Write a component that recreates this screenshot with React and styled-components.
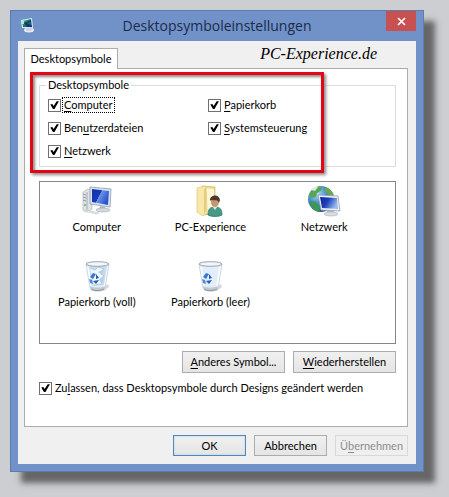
import styled, { createGlobalStyle } from "styled-components";

const groupOptions = [
  { id: "computer", before: "", letter: "C", after: "omputer", focused: true },
  { id: "papierkorb", before: "", letter: "P", after: "apierkorb" },
  { id: "benutzer", before: "Ben", letter: "u", after: "tzerdateien" },
  { id: "system", before: "", letter: "S", after: "ystemsteuerung" },
  { id: "netzwerk", before: "", letter: "N", after: "etzwerk" },
];

const desktopIcons = [
  { label: "Computer", Icon: ComputerIcon },
  { label: "PC-Experience", Icon: UserFolderIcon },
  { label: "Netzwerk", Icon: NetworkIcon },
  { label: "Papierkorb (voll)", Icon: FullBinIcon },
  { label: "Papierkorb (leer)", Icon: BinIcon },
];

export default function App() {
  return (
    <>
      <GlobalStyle />
      <Desktop>
        <Dialog>
          <TitleBar>
            <TitleIcon />
            <Title>Desktopsymboleinstellungen</Title>
            <CloseButton type="button" aria-label="Schließen">
              <svg width="9" height="9" viewBox="0 0 9 9">
                <path d="M1 1l7 7M8 1L1 8" stroke="#fff" strokeWidth="1.7" />
              </svg>
            </CloseButton>
          </TitleBar>

          <Client>
            <TabRow>
              <Tab type="button">Desktopsymbole</Tab>
              <Brand>PC-Experience.de</Brand>
            </TabRow>

            <Panel>
              <GroupArea>
                <Group>
                  <legend>Desktopsymbole</legend>
                  <OptionGrid>
                    {groupOptions.map((option) => (
                      <Option key={option.id} {...option} />
                    ))}
                  </OptionGrid>
                </Group>
                <Highlight />
              </GroupArea>

              <IconList>
                {desktopIcons.map(({ label, Icon }) => (
                  <IconItem key={label}>
                    <Icon />
                    <span>{label}</span>
                  </IconItem>
                ))}
              </IconList>

              <PanelButtons>
                <Button type="button">
                  <u>A</u>nderes Symbol...
                </Button>
                <Button type="button">
                  <u>W</u>iederherstellen
                </Button>
              </PanelButtons>

              <Option
                id="designs"
                before="Zu"
                letter="l"
                after="assen, dass Desktopsymbole durch Designs geändert werden"
              />
            </Panel>

            <Footer>
              <Button type="button" $primary>
                OK
              </Button>
              <Button type="button">Abbrechen</Button>
              <Button type="button" disabled>
                Ü<u>b</u>ernehmen
              </Button>
            </Footer>
          </Client>
        </Dialog>
      </Desktop>
    </>
  );
}

function Option({ id, before, letter, after, focused }) {
  return (
    <OptionLabel htmlFor={id}>
      <CheckBox type="checkbox" id={id} defaultChecked />
      <OptionText $focused={focused}>
        {before}
        <u>{letter}</u>
        {after}
      </OptionText>
    </OptionLabel>
  );
}

function TitleIcon() {
  return (
    <svg width="16" height="16" viewBox="0 0 16 16">
      <defs>
        <linearGradient id="titleScreen" x1="0" y1="0" x2="1" y2="1">
          <stop offset="0" stopColor="#48c98c" />
          <stop offset="0.45" stopColor="#148a6c" />
          <stop offset="1" stopColor="#173fae" />
        </linearGradient>
      </defs>
      <path d="M1 3l11-2 1 10-11 0z" fill="#dce9f2" />
      <path d="M2 4l9-2 1 8-9 0z" fill="url(#titleScreen)" />
      <path d="M4 6l7-3v2l-4 1 5 3v1l-5 0z" fill="#1d326f" />
      <path d="M1 4h3v3H1z" fill="#b7e5c9" />
      <ellipse cx="9" cy="13" rx="5" ry="2.5" fill="#e6ebef" />
      <path d="M5 11l8-1-2 4-4 0z" fill="#cbd4dd" />
    </svg>
  );
}

function ComputerIcon() {
  return (
    <svg width="32" height="32" viewBox="0 0 32 32">
      <defs>
        <linearGradient id="pcScreen" x1="0" y1="0" x2="1" y2="0.5">
          <stop offset="0" stopColor="#1234a4" />
          <stop offset="0.5" stopColor="#173cb8" />
          <stop offset="0.52" stopColor="#6c94e8" />
          <stop offset="1" stopColor="#2a54cc" />
        </linearGradient>
      </defs>
      <path d="M2 7l5-3 4 1v19l-5 3-4-2z" fill="#dfe3e5" stroke="#b0b7ba" strokeWidth="0.7" />
      <path d="M6 7v19" stroke="#a6adb0" />
      <path d="M2 9l3 1M2 12l3 1M2 15l3 1" stroke="#929a9e" />
      <circle cx="4" cy="20" r="1" fill="#6fae6b" />
      <path d="M19 21l5 1 1 4-7-1z" fill="#aeb7be" />
      <ellipse cx="22" cy="25" rx="7" ry="2" fill="#d3d9dd" stroke="#a2abb1" strokeWidth="0.6" />
      <path d="M9 2l21 2-1 18-20-3z" fill="#dae5f1" stroke="#8a9bb0" strokeWidth="0.8" />
      <path d="M11 4l17 2-1 14-16-3z" fill="url(#pcScreen)" />
      <path d="M6 25l12 3-3 1-12-3z" fill="#e3e6e7" stroke="#bcc2c6" strokeWidth="0.5" />
    </svg>
  );
}

function UserFolderIcon() {
  return (
    <svg width="32" height="32" viewBox="0 0 32 32">
      <path d="M8 1l13 1v27l-13 1z" fill="#f1d98a" stroke="#d6b65b" strokeWidth="0.7" />
      <path d="M11 3l9 1v24H11z" fill="#fff6d5" />
      <path d="M3 3l9-2 1 26-4 4-6-4z" fill="#f8e9ab" stroke="#dfc678" strokeWidth="0.7" />
      <path d="M10 4l2-2v24l-2 3z" fill="#e8cd78" />
      <path d="M14 30c0-6 2-8 7-8s7 2 7 8c-3 2-11 2-14 0z" fill="#479b86" stroke="#2c7564" strokeWidth="0.7" />
      <path d="M18 21l3 4 3-4z" fill="#d7e7db" />
      <ellipse cx="21" cy="17" rx="4" ry="5" fill="#c99570" />
      <path d="M16 16c-1-6 9-8 10-1l-1 3c-1-4-5-2-8-3z" fill="#4d392a" />
    </svg>
  );
}

function NetworkIcon() {
  return (
    <svg width="34" height="32" viewBox="0 0 34 32">
      <defs>
        <radialGradient id="globe" cx="0.35" cy="0.3" r="0.7">
          <stop offset="0" stopColor="#b5dcf5" />
          <stop offset="0.5" stopColor="#4a92cb" />
          <stop offset="1" stopColor="#255a93" />
        </radialGradient>
        <linearGradient id="netScreen" x1="0" y1="0" x2="1" y2="0.4">
          <stop offset="0" stopColor="#0d229f" />
          <stop offset="0.5" stopColor="#1e43b8" />
          <stop offset="1" stopColor="#96b9ef" />
        </linearGradient>
      </defs>
      <circle cx="14" cy="14" r="13" fill="url(#globe)" />
      <path d="M4 6c3-4 8-5 10-4l1 3-5 3-1 4-5 1-2-3z" fill="#59a553" />
      <path d="M18 2c5 1 8 5 9 9l-5-1-4-4z" fill="#68aa4b" />
      <path d="M3 16l6 1 4 5-1 5C6 26 3 21 3 16z" fill="#3e9659" />
      <path d="M4 5l4-3 3 0-3 4z" fill="#d6edde" />
      <path d="M20 25l6-1 2 5-9 1z" fill="#b8c1c8" />
      <ellipse cx="24" cy="29" rx="7" ry="2" fill="#d7dde2" stroke="#aab3bc" strokeWidth="0.6" />
      <path d="M11 10l20 1 2 15-19-1z" fill="#eef2f6" stroke="#929dac" strokeWidth="0.8" />
      <path d="M13 12l17 1 1 11-16-1z" fill="url(#netScreen)" />
    </svg>
  );
}

function BinIcon({ children }) {
  return (
    <svg width="32" height="32" viewBox="0 0 32 32">
      <path d="M17 29l10-5 1 3-5 4z" fill="#d9d9d9" />
      <path d="M5 4l4 24c3 3 12 3 15 0l4-24z" fill="#e2eefa" stroke="#b9cbdd" strokeWidth="0.7" />
      <path d="M7 7l3 19M26 7l-3 19" stroke="#ffffff" strokeWidth="1.5" />
      {children}
      <path d="M9 26c4 2 11 2 15 0l-1 4c-3 2-10 2-13 0z" fill="#c3c9cd" />
      <path d="M10 29c3 2 9 2 13 0" stroke="#8d959b" fill="none" />
      <ellipse cx="16.5" cy="4" rx="11.5" ry="2.3" fill="#f2f7fb" stroke="#9aa3ab" />
      <path d="M9 17l3-4 3 1-3 5z" fill="#3a7bd0" />
      <path d="M15 14l3 4-3 1zM18 20l-3 4-3-3z" fill="#2260b7" />
      <path d="M8 19l3 1 1 4-3-1z" fill="#4a8adb" />
    </svg>
  );
}

function FullBinIcon() {
  return (
    <BinIcon>
      <path d="M8 6l5-2 3 3 5-3 5 3-3 18-12 1z" fill="#cbdced" />
      <path d="M9 8l5 2 3-3 6 2-4 4 4 3-4 3 2 5-8 1" fill="#eff6fc" stroke="#a2bdd8" strokeWidth="0.7" />
      <path d="M17 12l6-3-2 6zM18 20l5-3-1 6z" fill="#b5cde5" />
    </BinIcon>
  );
}

const GlobalStyle = createGlobalStyle`
  * {
    box-sizing: border-box;
  }
  body {
    margin: 0;
    background-color: #cdced2;
    color: #000000;
    font-family: Lato, "Liberation Sans", sans-serif;
    font-size: 11px;
    line-height: 14px;
  }
  button {
    font: inherit;
    color: inherit;
    padding: 0;
  }
  u {
    text-underline-offset: 2px;
  }
`;

const Desktop = styled.main`
  padding: 10px 25px 25px 10px;
`;

const Dialog = styled.section`
  padding: 0 7px 7px;
  background-color: #7092c8;
  border: 1px solid #5c7cad;
  box-shadow: 11px 11px 6px #666666;
`;

const TitleBar = styled.header`
  display: grid;
  grid-template-columns: 30px 1fr 30px;
  height: 30px;
  > svg {
    margin: 6px 0 0 2px;
  }
`;

const Title = styled.h1`
  margin: 0;
  font-family: "Open Sans", "Noto Sans", sans-serif;
  font-size: 14px;
  font-weight: 400;
  line-height: 30px;
  text-align: center;
  color: #1d2b49;
`;

const CloseButton = styled.button`
  display: flex;
  align-items: center;
  justify-content: center;
  height: 20px;
  border: 0;
  background-color: #c75050;
`;

const Client = styled.div`
  padding: 7px 8px 8px 6px;
  background-color: #f0f0f0;
`;

const TabRow = styled.div`
  display: flex;
  justify-content: space-between;
  height: 20px;
`;

const Tab = styled.button`
  position: relative;
  height: 21px;
  width: 94px;
  border: 1px solid #acacac;
  border-bottom: 0;
  background-color: #ffffff;
`;

const Brand = styled.span`
  margin-right: 31px;
  font-family: "Monotype Corsiva", "Liberation Serif", serif;
  font-size: 16px;
  font-style: italic;
  line-height: 12px;
`;

const Panel = styled.div`
  padding: 9px 11px 31px 14px;
  border: 1px solid #acacac;
  background-color: #ffffff;
`;

const GroupArea = styled.div`
  position: relative;
`;

const Group = styled.fieldset`
  margin: 0;
  padding: 6px 8px 8px;
  border: 1px solid #dcdcdc;
  legend {
    margin-left: -2px;
    padding: 0 2px;
  }
`;

/* red marker frame drawn over the group box */
const Highlight = styled.div`
  position: absolute;
  top: -6px;
  bottom: -6px;
  left: -9px;
  right: 72px;
  border: 3px solid #e30613;
  box-shadow: 2px 2px 3px #8a8a8a, inset 2px 2px 3px #8a8a8a;
  pointer-events: none;
`;

const OptionGrid = styled.div`
  display: grid;
  grid-template-columns: 160px 1fr;
  row-gap: 9px;
`;

const OptionLabel = styled.label`
  display: flex;
  align-items: center;
  gap: 2px;
  height: 14px;
`;

const CheckBox = styled.input`
  appearance: none;
  flex: none;
  width: 13px;
  height: 13px;
  margin: 0;
  border: 1px solid #707070;
  background-color: #ffffff;
  &:checked::before {
    content: "";
    display: block;
    height: 11px;
    background-color: #000000;
    clip-path: polygon(12% 46%, 30% 42%, 42% 60%, 70% 16%, 90% 16%, 50% 86%, 36% 86%);
  }
`;

const OptionText = styled.span`
  padding: 0 1px;
  outline: ${(props) => (props.$focused ? "1px dotted #000000" : "none")};
`;

const IconList = styled.ul`
  display: grid;
  grid-template-columns: repeat(3, 1fr);
  row-gap: 26px;
  margin: 14px 0 0;
  padding: 3px 14px 34px 0;
  border: 1px solid #828790;
  list-style: none;
`;

const IconItem = styled.li`
  display: flex;
  flex-direction: column;
  align-items: center;
  gap: 3px;
`;

const PanelButtons = styled.div`
  display: flex;
  justify-content: flex-end;
  gap: 8px;
  margin: 7px 0 8px;
  button {
    width: 103px;
    height: 22px;
  }
`;

const Button = styled.button`
  width: 73px;
  height: 21px;
  border: 1px solid ${(props) => (props.$primary ? "#5586b8" : "#acacac")};
  background: linear-gradient(#f0f0f0, #e5e5e5);
  box-shadow: ${(props) => (props.$primary ? "inset 0 0 2px #8fd0f5" : "none")};
  &:disabled {
    border-color: #d9d9d9;
    background: #efefef;
    color: #8d8d8d;
  }
`;

const Footer = styled.footer`
  display: flex;
  justify-content: flex-end;
  gap: 8px;
  padding-top: 8px;
`;
